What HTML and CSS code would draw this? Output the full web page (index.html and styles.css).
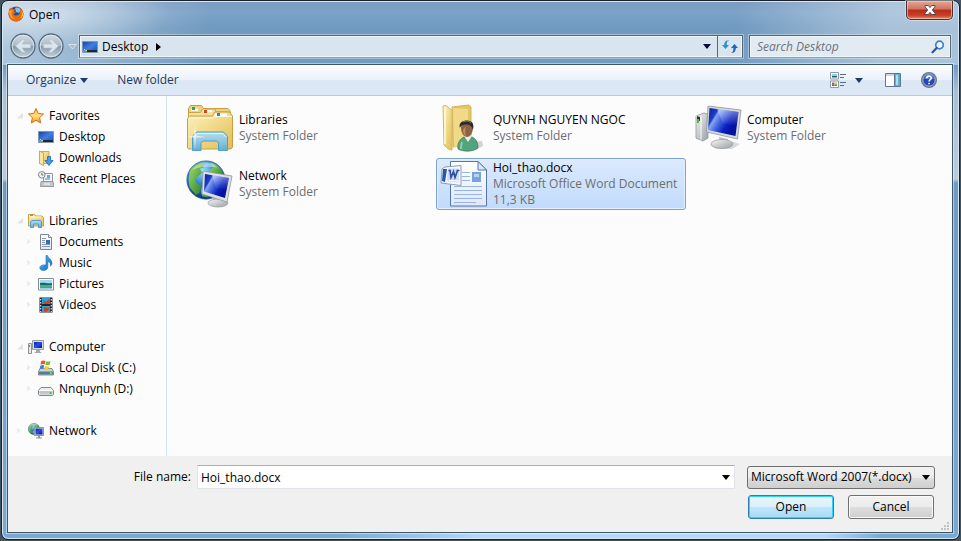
FILE: index.html
```html
<!DOCTYPE html>
<html lang="en">
<head>
<meta charset="utf-8">
<meta name="viewport" content="width=device-width, initial-scale=1">
<title>Open</title>
<link rel="stylesheet" href="styles.css">
</head>
<body>
<svg class="sprite" width="0" height="0" aria-hidden="true">
  <defs>
    <linearGradient id="gFolder" x1="0" y1="0" x2="1" y2="1"><stop offset="0" stop-color="#fdf3bd"/><stop offset="1" stop-color="#e2bd54"/></linearGradient>
    <linearGradient id="gGlass" x1="0" y1="0" x2="0" y2="1"><stop offset="0" stop-color="#b5dff5"/><stop offset="1" stop-color="#5aacd8"/></linearGradient>
    <linearGradient id="gScreen" x1="0" y1="0" x2=".9" y2=".5"><stop offset="0" stop-color="#0a1f9c"/><stop offset=".3" stop-color="#1c3fc8"/><stop offset=".36" stop-color="#86a5f2"/><stop offset=".55" stop-color="#4468df"/><stop offset=".8" stop-color="#0a20c4"/><stop offset="1" stop-color="#0612a0"/></linearGradient>
    <linearGradient id="gShine" x1="0" y1="0" x2="0" y2="1"><stop offset="0" stop-color="#fff" stop-opacity=".85"/><stop offset="1" stop-color="#fff" stop-opacity="0"/></linearGradient>
    <linearGradient id="gMini" x1="0" y1="0" x2="1" y2="1"><stop offset="0" stop-color="#0b1fa8"/><stop offset=".45" stop-color="#2a4fe0"/><stop offset="1" stop-color="#0812a8"/></linearGradient>
    <linearGradient id="gMetal" x1="0" y1="0" x2="1" y2="1"><stop offset="0" stop-color="#f6f6f6"/><stop offset="1" stop-color="#9a9ea3"/></linearGradient>
    <radialGradient id="gGlobe" cx=".4" cy=".25" r=".75"><stop offset="0" stop-color="#9fe4fb"/><stop offset=".45" stop-color="#2f86d3"/><stop offset="1" stop-color="#0c3276"/></radialGradient>
    <linearGradient id="gLand" x1="0" y1="0" x2="1" y2="1"><stop offset="0" stop-color="#a6e070"/><stop offset="1" stop-color="#1f7a24"/></linearGradient>
    <linearGradient id="gDesk" x1="0" y1="0" x2="1" y2="1"><stop offset="0" stop-color="#1b3fa3"/><stop offset=".5" stop-color="#3f7fe0"/><stop offset="1" stop-color="#1c4cae"/></linearGradient>
    <linearGradient id="gBall" x1="0" y1="0" x2="0" y2="1"><stop offset="0" stop-color="#d3dde4"/><stop offset=".48" stop-color="#a9bac6"/><stop offset=".52" stop-color="#8499a8"/><stop offset="1" stop-color="#c4d6e2"/></linearGradient>
    <linearGradient id="gNote" x1="0" y1="0" x2="1" y2="1"><stop offset="0" stop-color="#5cc0f4"/><stop offset="1" stop-color="#0c65b8"/></linearGradient>
    <linearGradient id="gStar" x1="0" y1="0" x2="0" y2="1"><stop offset="0" stop-color="#ffb53e"/><stop offset=".5" stop-color="#ffe27c"/><stop offset="1" stop-color="#f58f1d"/></linearGradient>
    <linearGradient id="gPage" x1="0" y1="0" x2="0" y2="1"><stop offset="0" stop-color="#ffffff"/><stop offset="1" stop-color="#dfe8f8"/></linearGradient>
    <symbol id="desktop" viewBox="0 0 16 16"><path d="M.5 2.500h15v11H.5z" fill="url(#gDesk)" stroke="#7f97ba"/><path d="M1 11h14v2H1z" fill="#20272f"/><path d="M1 11h4v2H1z" fill="#3f9edb"/><path d="M2 10h1v1H2zM4 11h1v1H4z" fill="#ffd75a"/><path d="M3 11h1v1H3z" fill="#7bd14a"/></symbol>
    <symbol id="libs16" viewBox="0 0 16 16"><path d="M.5 13V1.500h6l1 1.500h6.500l1.500 1.500V13z" fill="url(#gFolder)" stroke="#c9a043"/><path d="M1.500 4h12" stroke="#fffbe0"/><path d="M2 2h3v1H2z" fill="#4eb94c"/><path d="M2.500 14.500v-6L4 7.500h8l1.500 1v6h-3V11h-5v3.500z" fill="url(#gGlass)" stroke="#4d9ccb"/></symbol>
    <symbol id="globe" viewBox="0 0 32 32"><circle cx="16" cy="16" r="15.300" fill="url(#gGlobe)" stroke="#26609c" stroke-width=".6"/><path d="M3 9c3-5 7-7 12-7l-1 4-3 1 2 3-3 3-3 1 1 4 4 3-1 5-3 2-5-6-1-6z" fill="url(#gLand)"/><path d="M19 2c6 1 10 5 11 10l-3 2-3-3-4 1-1-4 3-2z" fill="url(#gLand)"/><path d="M13 21l5 1 2 3-3 5-4-1-1-4z" fill="url(#gLand)"/><path d="M5 8c5-7 14-8 20-2-6-1-14-1-20 2z" fill="#fff" opacity=".4"/></symbol>
  </defs>
</svg>

<main class="window">
  <header class="titlebar">
    <svg class="fox" viewBox="0 0 16 16" aria-hidden="true"><circle cx="8" cy="8" r="7.500" fill="#c2440e"/><circle cx="8.500" cy="6.500" r="5.500" fill="#1d4f9e"/><path d="M7 2c3-1 5 0 6 2l-2 3-3-1z" fill="#7cc5ee"/><path d="M1 3l2-1.500L4 3l3 .5-1 2 2 1-2.500 1.500C6 10 9 10 11 8.500c1.500-1.500 1.500-4 .5-6.500 3 1.500 4.500 5 3.500 8.500-1.200 3.800-5 5.500-8.500 4.800C3 14.500.8 11.500.5 8z" fill="#e86c10"/><path d="M13.500 5c1 3 .5 5.500-1.500 7.200 1.800-.4 2.700-1.700 3-3.200.2-1.500-.5-3-1.500-4z" fill="#ffd246"/><path d="M1 5l2-1 2 1-1.500 2L4 10l3 3C3 13 1 10 1 5z" fill="#fb9a2b"/></svg>
    <h1 class="title">Open</h1>
    <button class="close" type="button" aria-label="Close"><svg width="12" height="10" viewBox="0 0 12 10"><path d="M1 .5h3.300L6 2.600 7.700.5H11v1.300L8.300 5 11 8.200v1.300H7.700L6 7.400 4.300 9.500H1V8.200L3.700 5 1 1.800z" fill="#fff" stroke="#4b4049" stroke-width=".9"/></svg></button>
  </header>

  <nav class="navbar" aria-label="Location">
    <div class="travel">
      <button type="button" class="round" aria-label="Back"><svg viewBox="0 0 26 26"><circle cx="13" cy="13" r="12" fill="url(#gBall)" stroke="#566c7d" stroke-width="1.300"/><circle cx="13" cy="13" r="10.800" fill="none" stroke="#e2ebf1" stroke-opacity=".8"/><path d="M5.500 13l7-6.500h3L12 11h8.500v4H12l3.500 4.500h-3z" fill="#dbe5ec" stroke="#b1c1cd" stroke-width=".6"/></svg></button>
      <button type="button" class="round" aria-label="Forward"><svg viewBox="0 0 26 26"><circle cx="13" cy="13" r="12" fill="url(#gBall)" stroke="#566c7d" stroke-width="1.300"/><circle cx="13" cy="13" r="10.800" fill="none" stroke="#e2ebf1" stroke-opacity=".8"/><path d="M20.500 13l-7-6.500h-3L14 11H5.500v4H14l-3.500 4.500h3z" fill="#dbe5ec" stroke="#b1c1cd" stroke-width=".6"/></svg></button>
      <button type="button" class="recent" aria-label="Recent locations"><svg width="9" height="6" viewBox="0 0 9 6"><path d="M.7.500h7.600L4.500 5z" fill="#a9bccb" stroke="#dae5ee" stroke-width=".9"/></svg></button>
    </div>
    <div class="address">
      <svg class="i16" aria-hidden="true"><use href="#desktop"/></svg>
      <button type="button" class="crumb">Desktop</button>
      <svg class="crumb-arrow" width="5" height="8" viewBox="0 0 5 8" aria-hidden="true"><path d="M0 0l5 4-5 4z" fill="#000"/></svg>
      <button type="button" class="addr-drop" aria-label="Previous locations"><svg width="8" height="5" viewBox="0 0 8 5"><path d="M0 0h8L4 5z" fill="#05053f"/></svg></button>
      <button type="button" class="refresh" aria-label="Refresh"><svg width="16" height="14" viewBox="0 0 16 14"><path d="M7.500 1C5 .5 4.800 2 4.800 4v1H7L3.500 9 0 5h2.200C2.200 1.500 4.500-.5 7.500 1z" fill="#2f8fd0"/><path d="M8.300 12c2.700.8 3-1 3-3V8H9l3.500-4L16 8h-2.200c0 3.800-2.500 6-5.500 4z" fill="#2265b4"/></svg></button>
    </div>
    <label class="search">
      <input type="search" placeholder="Search Desktop" aria-label="Search Desktop">
      <svg width="14" height="14" viewBox="0 0 14 14" aria-hidden="true"><circle cx="8.500" cy="5" r="3.800" fill="#eaf4fc" stroke="#3f83c8" stroke-width="1.700"/><path d="M5.700 7.900L1.500 12.300" stroke="#34549b" stroke-width="2.200" stroke-linecap="round"/></svg>
    </label>
  </nav>

  <div class="client">
    <div class="toolbar">
      <button type="button" class="tool">Organize <svg width="8" height="5" viewBox="0 0 8 5" aria-hidden="true"><path d="M0 0h8L4 5z" fill="#1e3a66"/></svg></button>
      <button type="button" class="tool">New folder</button>
      <span class="spacer"></span>
      <button type="button" class="tool view" aria-label="Change your view"><svg width="17" height="16" viewBox="0 0 17 16"><path d="M.5.500h8v6.500h-8zM.5 9h8v6.500h-8z" fill="#fff" stroke="#8b99a8"/><path d="M2 2h5v2H2z" fill="#8fd0ef"/><path d="M2 4h5v1.500H2z" fill="#24605c"/><path d="M2 10.500h2.500v2H2z" fill="#d8433a"/><path d="M4.500 10.500H7v2H4.500z" fill="#e8c52d"/><path d="M2 12.500h2.500V14H2z" fill="#2e62bd"/><path d="M4.500 12.500H7V14H4.500z" fill="#3b9c42"/><path d="M10 2.500h6M10 5.500h4M10 10.500h6M10 13.500h4" stroke="#5b6a7e"/></svg><svg width="8" height="5" viewBox="0 0 8 5"><path d="M0 0h8L4 5z" fill="#1e3a66"/></svg></button>
      <button type="button" class="tool preview" aria-label="Show the preview pane"><svg width="16" height="14" viewBox="0 0 16 14"><path d="M.5.500h15v13H.5z" fill="#fff" stroke="#5f7591"/><path d="M1 1h9v2H1z" fill="#cfd9e6"/><path d="M10 1h5v12h-5z" fill="#56b4d6"/><path d="M11 2h2v10h-2z" fill="#a9e0f2"/><path d="M9.500 1v12" stroke="#5f7591"/></svg></button>
      <button type="button" class="tool help" aria-label="Help"><svg width="16" height="16" viewBox="0 0 16 16"><circle cx="8" cy="8" r="7.300" fill="#2546b4" stroke="#70767e" stroke-width="1.400"/><circle cx="8" cy="8" r="6.200" fill="none" stroke="#c5cbd6" stroke-width=".9"/><path d="M3 7a5 5 0 0 1 10 0z" fill="#6e8de0" opacity=".7"/><path d="M5.800 6.300C5.800 3.400 10.300 3.500 10.300 6c0 1.700-2.200 1.700-2.200 3.500M8.100 10.700v1.600" fill="none" stroke="#fff" stroke-width="1.600"/></svg></button>
    </div>

    <div class="body">
      <nav class="sidebar" aria-label="Places">
        <ul class="group">
          <li class="root open"><svg class="i16"><path d="M8 .5l2.200 4.900 5.300.6-3.900 3.600 1.100 5.400L8 12.300 3.300 15l1.100-5.400L.5 6l5.300-.6z" fill="url(#gStar)" stroke="#d2701a"/></svg><a href="#">Favorites</a></li>
          <li><svg class="i16"><use href="#desktop"/></svg><a href="#">Desktop</a></li>
          <li><svg class="i16"><path d="M1.500 1.500h9.500v12H1.500z" fill="url(#gFolder)" stroke="#cda94e"/><path d="M1.500 1l4 2v12.500l-4-2z" fill="#f9e79f" stroke="#cda94e"/><path d="M9.500 6.500h3v4h2.500l-4 5-4-5h2.500z" fill="#3fa0e6" stroke="#1a66b5" stroke-width=".8"/></svg><a href="#">Downloads</a></li>
          <li><svg class="i16"><path d="M5.500 2.500h9v10h-9z" fill="#f4f6f8" stroke="#93999f"/><path d="M3 10.500h12l1 5H2.500z" fill="#c4c7ca" stroke="#85898e" stroke-width=".8"/><path d="M7 8h5" stroke="#4d83c4"/><path d="M9 4h3v3H9z" fill="#58b0e8"/><circle cx="3.800" cy="3.800" r="3.300" fill="#eef2f5" stroke="#80878e"/><path d="M3.800 2v2H5.500" fill="none" stroke="#4a5560" stroke-width=".8"/><path d="M6 13h6" stroke="#fff"/></svg><a href="#">Recent Places</a></li>
        </ul>
        <ul class="group">
          <li class="root open"><svg class="i16"><use href="#libs16"/></svg><a href="#">Libraries</a></li>
          <li class="shut"><svg class="i16"><path d="M2.500.500h8l3 3v12h-11z" fill="url(#gPage)" stroke="#7d8790"/><path d="M10.500.500v3h3" fill="#fff" stroke="#7d8790"/><path d="M4 4.500h4M4 6.500h3M4 8.500h3M4 10.500h8M4 12.500h8" stroke="#8d9ab4"/><path d="M8 6h4v4H8z" fill="#2f6db8"/></svg><a href="#">Documents</a></li>
          <li class="shut"><svg class="i16"><path d="M8 .5h1.500c.5 3 4.500 3.500 4.500 8-.1 1-.6 1.700-1.500 2.700.5-3-.7-4.200-2.700-4.700v5.500c0 2-1.800 3.500-4.300 3.500-2.200 0-3.700-1.200-3.700-2.700C1.800 10.800 4 9.500 8 10z" fill="url(#gNote)" stroke="#1a6fb8" stroke-width=".6"/></svg><a href="#">Music</a></li>
          <li class="shut"><svg class="i16"><path d="M.5 2.500h15v11.500H.5z" fill="#fff" stroke="#878d93"/><path d="M2 4h12v4H2z" fill="#9fdaf4"/><path d="M2 7c5-1 7 1 12 0v2H2z" fill="#176c58"/><path d="M2 9h12v3.500H2z" fill="#3f9ac8"/><path d="M2 9c4 1 7 1 12 0v1.500H2z" fill="#5bb56a"/></svg><a href="#">Pictures</a></li>
          <li class="shut"><svg class="i16"><path d="M1.500.500h13v15h-13z" fill="#23262b"/><path d="M4 1h8v6H4zM4 9h8v6H4z" fill="#2f9fd8"/><path d="M5 3l3 2 3-3 1 4-2 1H6zM6 10l4 1 2-1-2 4-4 1z" fill="#b54b2b"/><path d="M2.700 2v13M13.300 2v13" stroke="#e5e8ea" stroke-width="1.200" stroke-dasharray="1.500 1.500"/></svg><a href="#">Videos</a></li>
        </ul>
        <ul class="group">
          <li class="root open"><svg class="i16"><path d="M.5 4.500h3v10h-3z" fill="#e6e8ea" stroke="#8d9297"/><path d="M1.500 6v2" stroke="#3fae3f"/><path d="M4.500 1.500h11v9h-11z" fill="#d8dbde" stroke="#989da2"/><path d="M6 3h8v6H6z" fill="url(#gMini)"/><path d="M8 11h4v1.500l2 1.500H6l2-1.500z" fill="#a4a9ae"/></svg><a href="#">Computer</a></li>
          <li class="shut"><svg class="i16"><path d="M2 8.500h12l1.500 3v3.500H.5v-3.500z" fill="#cbd3d8" stroke="#6c7982" stroke-width=".8"/><path d="M1 11.500h14v3H1z" fill="#4f7f92"/><path d="M12 12h1.500v2H12z" fill="#75f05f"/><path d="M3 1.500c2-1.500 3-1.200 4.500-.5l-1 3.500C5 3.800 4 4 2.500 4.800z" fill="#e8562a"/><path d="M8.300 1.300c1.500.7 2.700.5 4.200-.3l-1 3.700c-1.500.8-2.700.8-4.200 0z" fill="#79bb38"/><path d="M2.300 5.700c1.500-.8 2.500-1 4-.2L5.300 9C4 8.300 3 8.500 1.500 9.200z" fill="#3b83d8"/><path d="M7 6c1.500.8 2.700.8 4.200 0l-1 3.600c-1.500.8-2.700.7-4.200 0z" fill="#fbc92d"/></svg><a href="#">Local Disk (C:)</a></li>
          <li class="shut"><svg class="i16"><path d="M3 6.500h10l2.500 3v4l-1 1h-13l-1-1v-4z" fill="#eceeef" stroke="#85898d"/><path d="M1.500 10h13v3.500h-13z" fill="#c3c6c9"/><path d="M2 9.500h12" stroke="#fff"/><path d="M12 11h1.500v2H12z" fill="#34c330"/></svg><a href="#">Nnquynh (D:)</a></li>
        </ul>
        <ul class="group">
          <li class="root shut"><svg class="i16"><svg width="12" height="12"><use href="#globe" width="12" height="12"/></svg><path d="M6.500 4.500h9v8h-9z" fill="#d8dbde" stroke="#8f959b"/><path d="M7.500 5.500h7v6h-7z" fill="url(#gMini)"/><path d="M10 13h2v1.500h2v1H8v-1h2z" fill="#8f959b"/></svg><a href="#">Network</a></li>
        </ul>
      </nav>

      <ul class="files">
        <li><button type="button" class="file">
          <svg class="i48" viewBox="0 0 48 48"><path d="M2.500 43V4.500l2-3h11l2 3H42l2 2V43z" fill="#ecd283" stroke="#c59d43"/><path d="M5 4.500h7V7H5z" fill="#fff"/><path d="M6 3h3v3H6z" fill="#36a342"/><path d="M2.500 8.500h12l2-3.500h12l2 3h14V43h-42z" fill="#f4e19a" stroke="#caa54c"/><path d="M17 6h9v2h-9z" fill="#fff"/><path d="M18 6h3v3h-3z" fill="#dc4425"/><path d="M1.500 14.500l2-2.500h23l2-4h15l3 4v31l-1.500 2h-42L1.500 44z" fill="url(#gFolder)" stroke="#c79f42"/><path d="M29 9.500h12V12H28z" fill="#fff"/><path d="M31 9h3v3h-3z" fill="#2e86c4"/><path d="M3 14h24l2-1.500h17" fill="none" stroke="#fff9d7"/><path d="M6.500 46.500v-14l4-4.500h27l4 4.500v14h-9V39l-2-2H17l-2 2v7.500z" fill="url(#gGlass)" fill-opacity=".93" stroke="#4d9fcc"/><path d="M8 33l3-3.500h26l3 3.500" fill="none" stroke="#e3f6ff"/><path d="M9 20l1 11.500L20 33l-10 .8L9 46l-1-12.200L1 33l7-1.500z" fill="#fff" opacity=".6"/></svg>
          <span class="meta"><span class="name">Libraries</span><span>System Folder</span></span></button></li>
        <li><button type="button" class="file">
          <svg class="i48" viewBox="0 0 48 48"><path d="M18 40l24-3 1 5-8 4H20z" fill="#6b7075" opacity=".3"/><path d="M12 3l17-2 2 2v37l-18 3z" fill="#e4c467" stroke="#d2b25b"/><path d="M13 4l15 1v35l-14 3z" fill="#f0d987"/><path d="M3 2l3-.5 6 5V46l-3-.5L4 41z" fill="url(#gFolder)" stroke="#d8b75b"/><path d="M5 3v37" stroke="#fffbe1" stroke-width="1.500"/><path d="M18 45c-1-6 2-10 6-12l5-1c5 1 9 4 9 12-5 4-15 4-20 1z" fill="#53a37c" stroke="#2f7958" stroke-width=".7"/><path d="M24 32l4 6 4-6-2-2h-5z" fill="#e9f0ec"/><path d="M21 24c0-5 3-7 7-7s6 3 5 8c-1 5-3 8-6 8s-6-4-6-9z" fill="#8d6241"/><path d="M23 26c0 3 1 5 3 6-1-4-1-7 0-10z" fill="#bd8e65"/><path d="M20 24c-2-5 3-8 7-7.500 6 .5 7 4 6 9-1-3-3-5-6-5s-6 0-7 3.500z" fill="#2d2b2a"/><path d="M23 18c3-1.500 6-1 8 1" stroke="#777" fill="none"/><path d="M22 38c-1 3-1 4-1 7" stroke="#8cd1ad" fill="none" stroke-width="2"/></svg>
          <span class="meta"><span class="name">QUYNH NGUYEN NGOC</span><span>System Folder</span></span></button></li>
        <li><button type="button" class="file">
          <svg class="i48" viewBox="0 0 48 48"><path d="M16 41c8-4 20-5 30-1l-8 5H22z" fill="#6b7075" opacity=".25"/><path d="M2 12l8-3 4 1v24l-5 3-7-3z" fill="url(#gMetal)" stroke="#8f9499" stroke-width=".8"/><path d="M2 12l5 1.500v22" fill="none" stroke="#fff"/><path d="M3 12l3 1v4l-3-1z" fill="#303538"/><path d="M3 15h2v4H3z" fill="#43c73d"/><path d="M25 33l9 2v6h-8z" fill="#b8bcc0"/><ellipse cx="28" cy="40" rx="11" ry="4.500" fill="url(#gMetal)" stroke="#999da2" stroke-width=".7"/><path d="M14 2l33 4-3.500 29L12.500 28z" fill="#d5d9dc" stroke="#92979c" stroke-width=".8"/><path d="M15.500 4l29 4-3 24-27.500-6z" fill="url(#gScreen)"/><path d="M23 5l21.500 3-2 14-14-3z" fill="url(#gShine)" opacity=".5"/></svg>
          <span class="meta"><span class="name">Computer</span><span>System Folder</span></span></button></li>
        <li><button type="button" class="file">
          <svg class="i48" viewBox="0 0 48 48"><svg width="40" height="40"><use href="#globe" width="40" height="40"/></svg><path d="M27 36l8 2v5h-8z" fill="#aeb3b8"/><ellipse cx="32" cy="43" rx="10" ry="4" fill="url(#gMetal)" stroke="#979ca1" stroke-width=".7"/><path d="M17 11l29 5-5 26-25-8z" fill="#dde0e3" stroke="#8f959a" stroke-width=".8"/><path d="M19 14l24 4-4 20-21-6.500z" fill="url(#gScreen)"/><path d="M26 15l17 3-2 12-11-2z" fill="url(#gShine)" opacity=".5"/></svg>
          <span class="meta"><span class="name">Network</span><span>System Folder</span></span></button></li>
        <li><button type="button" class="file selected" aria-pressed="true">
          <svg class="i48" viewBox="0 0 48 48"><path d="M10.500 1.500H38l8.500 8.500v36h-36z" fill="url(#gPage)" stroke="#5476ae"/><path d="M38 1.500V10h8.500z" fill="#dbe7fa" stroke="#5476ae"/><path d="M22 12.500h8M22 16.500h8M22 20.500h8M14 26.500h28M14 30.500h28M14 34.500h28M14 38.500h28M14 42.500h22" stroke="#9ab4e0"/><path d="M32 12h9v10h-9z" fill="#78a3da"/><path d="M34 14h5v3h-5z" fill="#b9d5f4"/><path d="M5 7l16-1.500v20L1 23 2 9z" fill="#f6f8fd" stroke="#8190b4" stroke-width=".9"/><path d="M3 9h4L5 22l-3-1z" fill="#2856ad"/><path d="M8 8.500h11v14l-12-1z" fill="#cfdaf2"/><path d="M8.500 10.500h2.500M10 10.500l1 7 2.500-6 1.500 6 2.500-7M16.500 10.500h3" fill="none" stroke="#2b4fa1" stroke-width="1.600"/><path d="M9 20.500l10 .5" stroke="#fff"/></svg>
          <span class="meta"><span class="name">Hoi_thao.docx</span><span>Microsoft Office Word Document</span><span>11,3 KB</span></span></button></li>
      </ul>
    </div>

    <form class="footer">
      <label class="file-label" for="fname">File name:</label>
      <div class="combo"><input id="fname" type="text" value="Hoi_thao.docx"><button type="button" aria-label="Recent file names"><svg width="8" height="5" viewBox="0 0 8 5"><path d="M0 0h8L4 5z" fill="#000"/></svg></button></div>
      <div class="type"><select aria-label="File type"><option>Microsoft Word 2007(*.docx)</option></select><svg width="8" height="5" viewBox="0 0 8 5" aria-hidden="true"><path d="M0 0h8L4 5z" fill="#000"/></svg></div>
      <div class="actions"><button type="button" class="btn primary">Open</button><button type="button" class="btn">Cancel</button></div>
      <svg class="grip" width="8" height="8" viewBox="0 0 8 8" aria-hidden="true"><path d="M6 0h2v2H6zM3 3h2v2H3zM6 3h2v2H6zM0 6h2v2H0zM3 6h2v2H3zM6 6h2v2H6z" fill="#c2c2c2"/></svg>
    </form>
  </div>
</main>
</body>
</html>
```
FILE: styles.css
```css
* { box-sizing: border-box; }

body {
  margin: 0;
  min-height: 100vh;
  display: flex;
  padding: 0 1px 1px;
  background: #41545f;
  color: #000;
  font: 12px/16px "Open Sans", "Noto Sans", sans-serif;
}

button, input, select { font: inherit; color: inherit; margin: 0; }
button { padding: 0; border: 0; background: none; }
svg { display: block; flex: none; }
ul { list-style: none; margin: 0; padding: 0; }
.sprite { position: absolute; }
.i16 { width: 16px; height: 16px; }
.i48 { width: 48px; height: 48px; }

.window {
  flex: 1;
  display: flex;
  flex-direction: column;
  padding: 0 6px 6px 5px;
  border: 1px solid #1b2129;
  border-radius: 7px;
  box-shadow: inset 0 0 0 1px #d7e7f3;
  background:
    radial-gradient(ellipse 130px 34px at 40px 14px, rgba(255, 255, 255, .5), transparent),
    linear-gradient(100deg, transparent 76%, rgba(255, 255, 255, .4) 92%) top / 100% 64px no-repeat,
    linear-gradient(90deg, rgba(255, 255, 255, .45), transparent 22%) top / 100% 64px no-repeat,
    linear-gradient(90deg, transparent 35%, #b5d7fa 50%, #b5d7fa 86%, transparent 92%) bottom / 100% 8px no-repeat,
    linear-gradient(#7b9cc0 0, #7ba3c8 12px, #6f99bf 28px, #709cc2 64px, #a9bfd3 90px, #bccbd9 178px, #6f9bc1 182px, #79aad2 100%);
}

.titlebar { display: flex; height: 34px; }
.fox { width: 16px; height: 16px; margin: 5px 5px 0 1px; }
.title { flex: 1; margin: 6px 0 0; font-size: 12px; font-weight: 400; line-height: 16px; }
.close {
  width: 47px;
  height: 19px;
  display: grid;
  place-items: center;
  border: 1px solid #4d2c31;
  border-top: 0;
  border-radius: 0 0 5px 5px;
  box-shadow: inset 0 0 0 1px rgba(255, 210, 190, .6), 0 0 0 1px rgba(255, 255, 255, .4);
  background: linear-gradient(#e5a593, #d0735f 45%, #b72d17 50%, #c9402a 80%, #e58a66);
}

.navbar { display: flex; height: 29px; }
.travel { display: flex; width: 72px; padding-left: 3px; }
.round { width: 26px; height: 26px; margin: -2px 2px 0 0; }
.round svg { width: 26px; height: 26px; }
.recent { width: 13px; height: 23px; display: grid; place-items: center; }

.address, .search {
  height: 23px;
  display: flex;
  align-items: center;
  border: 1px solid #53687b;
  border-bottom-color: #8ba0b2;
  background: #d9e5ee;
  box-shadow: inset 0 0 0 1px #eff5f9, 0 0 0 1px rgba(255, 255, 255, .35);
}
.address { flex: 1; padding-left: 2px; }
.crumb { margin: 0 8px 0 4px; }
.addr-drop { margin-left: auto; width: 20px; height: 21px; display: grid; place-items: center; }
.refresh { width: 25px; height: 21px; display: grid; place-items: center; border-left: 1px solid #53687b; }
.search { width: 202px; margin: 0 2px 0 6px; padding: 0 5px 0 7px; background: #e3ebf2; }
.search input { flex: 1; min-width: 0; padding: 0; border: 0; outline: 0; background: none; appearance: none; }
.search input::placeholder { color: #6c7378; font-style: italic; opacity: 1; }

.client {
  flex: 1;
  display: flex;
  flex-direction: column;
  border: 1px solid #3e566b;
  box-shadow: 0 0 0 1px rgba(255, 255, 255, .45);
  background: #f0f0f0;
}

.toolbar {
  display: flex;
  align-items: center;
  height: 31px;
  padding: 0 15px 0 18px;
  border-bottom: 1px solid #bccbdc;
  background: linear-gradient(#fdfeff, #e9f1fb 50%, #dce7f5 52%, #dde8f6);
}
.tool { display: flex; align-items: center; gap: 4px; margin-right: 29px; color: #1e395b; }
.spacer { flex: 1; }
.view { gap: 8px; margin-right: 22px; }
.preview { margin-right: 20px; }
.help { margin-right: 0; }

.body { flex: 1; display: flex; background: #fcfcfc; }

.sidebar { width: 159px; padding: 9px 0; border-right: 1px solid #d5e4f2; }
.group { margin-bottom: 21px; }
.group:last-child { margin-bottom: 0; }
.group li { display: flex; align-items: center; gap: 5px; height: 21px; padding-left: 19px; }
.group li::before { content: ""; width: 6px; height: 6px; }
.group .root { padding-left: 9px; }
.group .open::before { background: #e4e4e4; clip-path: polygon(100% 0, 100% 100%, 0 100%); }
.group .shut::before { background: #ececec; clip-path: polygon(0 0, 70% 50%, 0 100%); }
.group a { color: #000; text-decoration: none; white-space: nowrap; }

.files {
  flex: 1;
  display: grid;
  grid-template-columns: repeat(auto-fill, 250px);
  gap: 4px;
  align-content: start;
  padding: 6px 0 6px 15px;
}
.file {
  display: flex;
  align-items: center;
  gap: 5px;
  width: 100%;
  height: 52px;
  padding: 0 3px;
  border: 1px solid transparent;
  border-radius: 3px;
  text-align: left;
  color: #6d6d6d;
  white-space: nowrap;
}
.meta { display: flex; flex-direction: column; }
.name { color: #000; }
.selected {
  border-color: #7da2ce;
  box-shadow: inset 0 0 0 1px #e3effd;
  background: linear-gradient(#dceafc, #c1dbfc);
}

.footer {
  position: relative;
  display: grid;
  grid-template-columns: 183px 1fr 188px;
  gap: 6px 12px;
  align-items: center;
  padding: 9px 17px 13px 0;
}
.file-label { text-align: right; }
.combo { display: flex; height: 24px; margin-left: -6px; border: 1px solid #e2e3ea; border-top-color: #abadb3; background: #fff; }
.combo input { flex: 1; min-width: 0; padding: 2px 3px 0; border: 0; outline: 0; background: none; }
.combo button { width: 16px; display: grid; place-items: center; }
.type { display: grid; align-items: center; height: 23px; }
.type > * { grid-area: 1 / 1; }
.type select {
  width: 100%;
  height: 23px;
  padding: 0 18px 0 3px;
  border: 1px solid #707070;
  border-radius: 3px;
  appearance: none;
  background: linear-gradient(#f2f2f2, #ebebeb 50%, #dddddd 52%, #cfcfcf);
}
.type svg { justify-self: end; margin-right: 5px; pointer-events: none; }
.actions { grid-column: 3; display: flex; gap: 14px; padding: 0 1px; }
.btn {
  flex: 1;
  height: 24px;
  border: 1px solid #707070;
  border-radius: 3px;
  box-shadow: inset 0 0 0 1px #fbfbfb;
  background: linear-gradient(#f2f2f2, #ebebeb 50%, #dddddd 52%, #cfcfcf);
}
.primary {
  border-color: #2c7fae;
  box-shadow: inset 0 0 0 1px #2fd3fb;
  background: linear-gradient(#eaf6fd, #d9f0fc 50%, #bee6fd 52%, #a9daf3);
}
.grip { position: absolute; right: 3px; bottom: 2px; }
```
